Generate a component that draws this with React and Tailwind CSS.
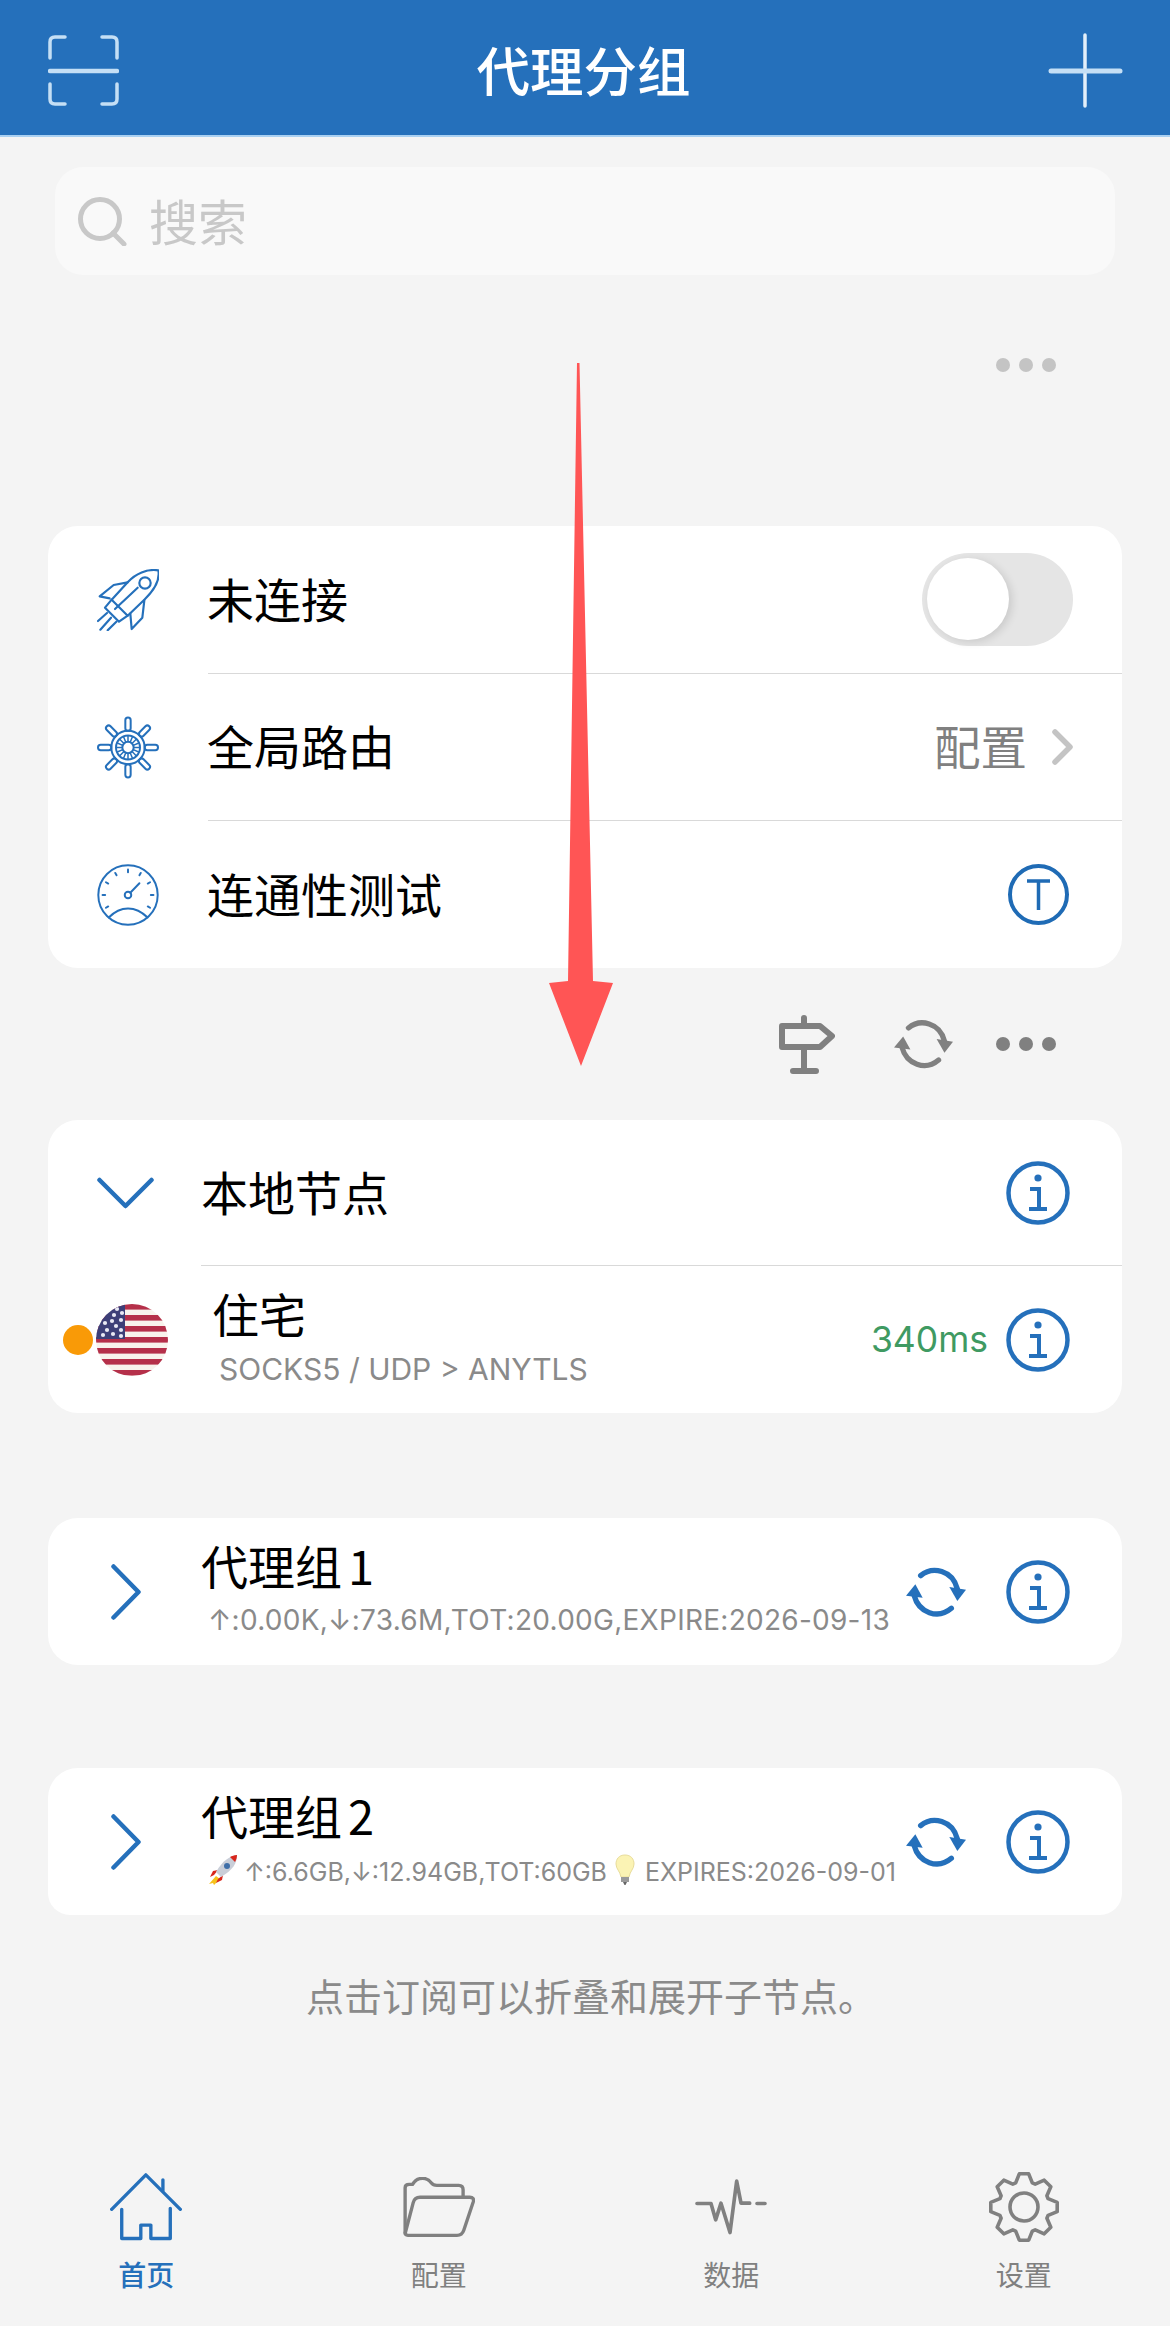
const BLUE = "#2570bb";
const GREY = "#808080";

function ScanIcon() {
  return (
    <svg width="71" height="71" viewBox="0 0 71 71" fill="none" stroke="#c5dff5" strokeLinecap="round">
      <path strokeWidth="3.5" d="M17 2H7Q2 2 2 7V23M54 2H64Q69 2 69 7V23M2 49V64Q2 69 7 69H17M69 49V64Q69 69 64 69H54" />
      <path strokeWidth="4.5" d="M2 36H69" />
    </svg>
  );
}

function PlusIcon() {
  return (
    <svg width="75" height="75" viewBox="0 0 75 75" fill="none" strokeLinecap="round">
      <path stroke="#e3effa" strokeWidth="3.5" d="M37 2V73" />
      <path stroke="#c5dff5" strokeWidth="5" d="M3 38H72" />
    </svg>
  );
}

function SearchIcon() {
  return (
    <svg width="49" height="49" viewBox="0 0 49 49" fill="none" stroke="#c8c8c8" strokeWidth="5" strokeLinecap="round">
      <circle cx="22" cy="22" r="19.5" />
      <path d="M35 36L46 47" />
    </svg>
  );
}

function RocketIcon() {
  return (
    <svg width="62" height="62" viewBox="0 0 186 186" fill="none" stroke={BLUE} strokeWidth="6.5" strokeLinecap="round" strokeLinejoin="round">
      <path d="M184 4C150 -1 115 14 92 40L44 92L92 140L142 92C170 65 190 35 184 4Z" />
      <circle cx="144" cy="42" r="17" />
      <path d="M92 40L50 48L8 82L38 88" />
      <path d="M142 94L136 146L104 180L100 134" />
      <path d="M44 92L24 116L66 158L92 140" />
      <path d="M54 120L122 56" />
      <path d="M30 132L3 156M42 146L10 182M58 158L32 184" />
    </svg>
  );
}

function HelmIcon() {
  const handles = [0, 45, 90, 135, 180, 225, 270, 315];
  const spokes = [0, 22.5, 45, 67.5, 90, 112.5, 135, 157.5, 180, 202.5, 225, 247.5, 270, 292.5, 315, 337.5];
  return (
    <svg width="63" height="63" viewBox="0 0 186 186" fill="none" stroke={BLUE} strokeWidth="6">
      {handles.map((a) => (
        <rect key={a} x="85" y="3" width="16" height="40" rx="8" fill="#fff" transform={`rotate(${a} 93 93)`} />
      ))}
      {spokes.map((a) => (
        <path key={a} strokeWidth="4.5" d="M93 58V76" transform={`rotate(${a} 93 93)`} />
      ))}
      <circle cx="93" cy="93" r="50" />
      <circle cx="93" cy="93" r="36" />
      <circle cx="93" cy="93" r="17" />
    </svg>
  );
}

function GaugeIcon() {
  const angles = [-120, -90, -60, -30, 0, 30, 60, 90, 120];
  return (
    <svg width="63" height="64" viewBox="0 0 190 192" fill="none" stroke={BLUE} strokeWidth="6" strokeLinecap="round">
      <circle cx="95" cy="96" r="91" />
      {angles.map((a) => (
        <path key={a} d="M95 18V26" transform={`rotate(${a} 95 96)`} />
      ))}
      <circle cx="95" cy="96" r="10" />
      <path d="M102 89L130 60" />
      <path d="M36 165C72 128 118 128 155 165" />
    </svg>
  );
}

function RefreshIcon({ color, width = 60, height = 50 }) {
  return (
    <svg width={width} height={height} viewBox="0 0 180 150" fill="none">
      <path d="M44 26C80 -4 140 10 154 66" stroke={color} strokeWidth="16" strokeLinecap="round" />
      <path d="M130 60L180 68L154 102Z" fill={color} />
      <path d="M136 124C96 158 38 138 24 84" stroke={color} strokeWidth="16" strokeLinecap="round" />
      <path d="M0 86L28 52L50 92Z" fill={color} />
    </svg>
  );
}

function InfoIcon() {
  return (
    <svg width="64" height="64" viewBox="0 0 64 64" fill="none" stroke={BLUE} strokeWidth="4.5">
      <circle cx="32" cy="32" r="29.5" />
      <circle cx="32" cy="17" r="3.6" fill={BLUE} stroke="none" />
      <path strokeWidth="4" d="M24 28H33V47M23 48H41" />
    </svg>
  );
}

function TestIcon() {
  return (
    <svg width="61" height="61" viewBox="0 0 61 61" fill="none" stroke="#1f6bb5" strokeWidth="4">
      <circle cx="30.5" cy="30.5" r="28.5" />
      <path strokeWidth="3.5" d="M19 17H42M30.5 17V46" />
    </svg>
  );
}

function SignIcon() {
  return (
    <svg width="56" height="59" viewBox="0 0 56 59" fill="none" stroke={GREY} strokeWidth="6" strokeLinecap="round" strokeLinejoin="round">
      <path d="M3 11H41L53 21L41 32H3Z" />
      <path d="M25 3V10M25 33V55M14 56H37" />
    </svg>
  );
}

function UsFlag() {
  const stripes = [0, 1, 2, 3, 4, 5, 6];
  const stars = [
    [21, 5], [26, 9], [18, 11], [25, 16], [16, 17], [9, 19],
    [20, 22], [11, 26], [25, 26], [17, 30], [7, 31], [25, 32],
  ];
  return (
    <svg width="72" height="72" viewBox="0 0 72 72" className="shrink-0">
      <defs>
        <clipPath id="flagClip">
          <circle cx="36" cy="36" r="36" />
        </clipPath>
      </defs>
      <g clipPath="url(#flagClip)">
        <rect width="72" height="72" fill="#f8f3ec" />
        {stripes.map((i) => (
          <rect key={i} y={i * 11} width="72" height="5.6" fill="#b5304a" />
        ))}
        <rect width="29" height="35" fill="#3d3f78" />
        {stars.map(([x, y]) => (
          <circle key={`${x}-${y}`} cx={x} cy={y} r="2.1" fill="#e9e9f4" />
        ))}
      </g>
    </svg>
  );
}

function ChevronDown() {
  return (
    <svg width="57" height="32" viewBox="0 0 57 32" fill="none" stroke={BLUE} strokeWidth="4.5" strokeLinecap="round" strokeLinejoin="round">
      <path d="M2.5 3L28.5 29L54.5 3" />
    </svg>
  );
}

function ChevronRight() {
  return (
    <svg width="30" height="56" viewBox="0 0 30 56" fill="none" stroke={BLUE} strokeWidth="4.5" strokeLinecap="round" strokeLinejoin="round">
      <path d="M2.5 2.5L27.5 28L2.5 53.5" />
    </svg>
  );
}

function RocketEmoji() {
  return (
    <svg width="30" height="30" viewBox="0 0 30 30" className="shrink-0">
      <path d="M8 21L1 29L5 28L6 30L12 24Z" fill="#f6c21c" />
      <path d="M6 20L2 22L5 16L10 15Z" fill="#d8261c" />
      <path d="M10 24L8 28L14 25L15 20Z" fill="#d8261c" />
      <path d="M29 0C22 1 15 5 8 17L13 22C25 15 29 8 29 0Z" fill="#c9ced8" />
      <path d="M29 0C26 0 24 1 22 2L27 7C28 5 29 3 29 0Z" fill="#d8261c" />
      <circle cx="19" cy="11" r="3" fill="#3f6fa8" />
    </svg>
  );
}

function BulbEmoji() {
  return (
    <svg width="20" height="32" viewBox="0 0 20 32" className="shrink-0">
      <path d="M10 1C4 1 1 5 1 10C1 15 5 17 6 23H14C15 17 19 15 19 10C19 5 16 1 10 1Z" fill="#fbf3b4" stroke="#e8dc9a" />
      <rect x="6" y="23" width="8" height="5" fill="#9a9a9a" />
      <path d="M8 28H12L10.5 31H9.5Z" fill="#666" />
    </svg>
  );
}

function HomeIcon() {
  return (
    <svg width="72" height="68" viewBox="0 0 215 202" fill="none" stroke={BLUE} strokeWidth="10" strokeLinecap="round" strokeLinejoin="round">
      <path d="M5 108L107 5L210 108" />
      <path d="M158 52V20" />
      <path d="M35 108V195H92V155H122V195H180V105" />
    </svg>
  );
}

function FolderIcon() {
  return (
    <svg width="72" height="60" viewBox="0 0 213 178" fill="none" stroke={GREY} strokeWidth="10" strokeLinecap="round" strokeLinejoin="round">
      <path d="M6 165V32Q6 22 18 22H28Q38 4 58 4Q74 4 84 18Q89 25 100 25H165Q178 25 178 38V58" />
      <path d="M6 168L30 76Q34 60 50 60H198Q212 60 208 74L180 158Q175 173 160 173H14Q6 173 6 165" />
    </svg>
  );
}

function PulseIcon() {
  return (
    <svg width="72" height="56" viewBox="0 0 216 167" fill="none" stroke={GREY} strokeWidth="11" strokeLinecap="round" strokeLinejoin="round">
      <path d="M6 73H48L62 122L78 72L105 160L125 6L138 72H164M186 73H210" />
    </svg>
  );
}

// eight toothed gear, worked out from the angles
function gearPath() {
  const pts = [];
  for (let i = 0; i < 8; i++) {
    const a = (i * Math.PI) / 4 - Math.PI / 2;
    const add = (r, d) => pts.push([36 + r * Math.cos(a + d), 36 + r * Math.sin(a + d)]);
    add(25.5, -0.33);
    add(33.5, -0.14);
    add(33.5, 0.14);
    add(25.5, 0.33);
  }
  return "M" + pts.map(([x, y]) => `${x.toFixed(1)} ${y.toFixed(1)}`).join("L") + "Z";
}

function GearIcon() {
  return (
    <svg width="72" height="72" viewBox="0 0 72 72" fill="none" stroke={GREY} strokeWidth="3.6" strokeLinejoin="round">
      <path d={gearPath()} />
      <circle cx="36" cy="36" r="14" />
    </svg>
  );
}

function Dots({ color }) {
  return (
    <div className="flex gap-[9px]">
      <span className={`w-[14px] h-[14px] rounded-full ${color}`} />
      <span className={`w-[14px] h-[14px] rounded-full ${color}`} />
      <span className={`w-[14px] h-[14px] rounded-full ${color}`} />
    </div>
  );
}

function SettingRow({ icon, label, height = "h-[147px]", children }) {
  return (
    <div className={`flex items-center ${height} pl-[49px] pr-[49px]`}>
      <div className="w-[62px] flex justify-center">{icon}</div>
      <div className="ml-[48px] pb-[5px] text-[47px] leading-none text-black">{label}</div>
      <div className="ml-auto flex items-center">{children}</div>
    </div>
  );
}

function ProxyCard({ title, subtitle, className }) {
  return (
    <div className={`mx-[48px] h-[147px] bg-white flex items-center ${className}`}>
      <div className="w-[153px] pl-[63px] flex items-center">
        <ChevronRight />
      </div>
      <div className="w-[705px] pb-[6px]">
        <div className="text-[47px] leading-[48px] text-black flex gap-[6px]">{title}</div>
        <div className="mt-[15px] pl-[7px] h-[32px] flex items-center whitespace-nowrap text-[#8a8a8a] font-['Inter','Noto_Sans_CJK_SC',sans-serif]">
          {subtitle}
        </div>
      </div>
      <RefreshIcon color={BLUE} />
      <div className="ml-[40px]">
        <InfoIcon />
      </div>
    </div>
  );
}

function Tab({ icon, label, active }) {
  return (
    <div className="flex flex-col items-center">
      <div className="h-[72px] flex items-center justify-center">{icon}</div>
      <div className={`mt-[15px] text-[28px] leading-[32px] ${active ? "text-[#2570bb] font-medium" : "text-[#808080]"}`}>{label}</div>
    </div>
  );
}

export default function App() {
  return (
    <div className="relative w-[1170px] h-[2326px] overflow-hidden bg-[#f4f4f4] font-['Noto_Sans_CJK_SC','Inter',sans-serif]">
      {/* Top bar */}
      <div className="h-[137px] pt-[6px] bg-[#2570bb] border-b-2 border-[#a9d0f2] flex items-center justify-between pl-[48px] pr-[47px]">
        <ScanIcon />
        <div className="pb-[3px] text-[53.5px] leading-none font-medium text-white">代理分组</div>
        <PlusIcon />
      </div>

      {/* Search */}
      <div className="mt-[30px] mx-[55px] h-[108px] rounded-[28px] bg-[#f9f9f9] flex items-center pl-[23px]">
        <SearchIcon />
        <div className="ml-[22px] pb-[4px] text-[49px] leading-none text-[#c8c8c8]">搜索</div>
      </div>

      <div className="mt-[83px] flex justify-end pr-[114px]">
        <Dots color="bg-[#c4c4c4]" />
      </div>

      {/* Connection card */}
      <div className="mt-[154px] mx-[48px] rounded-[30px] bg-white">
        <SettingRow icon={<RocketIcon />} label="未连接">
          <div className="relative w-[151px] h-[93px] rounded-full bg-[#e5e5e5]">
            <div className="absolute left-[5px] top-[5px] w-[82px] h-[82px] rounded-full bg-white shadow-[3px_2px_8px_rgba(0,0,0,0.12)]" />
          </div>
        </SettingRow>
        <div className="ml-[160px] h-px bg-[#d9d9d9]" />
        <SettingRow icon={<HelmIcon />} label="全局路由" height="h-[146px]">
          <span className="pb-[4px] text-[46.5px] leading-none text-[#808080]">配置</span>
          <svg className="ml-[25px]" width="21" height="36" viewBox="0 0 21 36" fill="none" stroke="#c4c4c4" strokeWidth="5.5" strokeLinecap="round" strokeLinejoin="round">
            <path d="M3 3L18 18L3 33" />
          </svg>
        </SettingRow>
        <div className="ml-[160px] h-px bg-[#d9d9d9]" />
        <SettingRow icon={<GaugeIcon />} label="连通性测试">
          <div className="mr-[4px]">
            <TestIcon />
          </div>
        </SettingRow>
      </div>

      {/* Toolbar */}
      <div className="mt-[46px] h-[60px] flex items-center justify-end pr-[114px]">
        <SignIcon />
        <div className="ml-[59px]">
          <RefreshIcon color={GREY} width={59} height={50} />
        </div>
        <div className="ml-[43px]">
          <Dots color="bg-[#808080]" />
        </div>
      </div>

      {/* Local nodes */}
      <div className="mt-[46px] mx-[48px] rounded-[30px] bg-white">
        <div className="h-[145px] flex items-center pl-[49px] pr-[52px]">
          <ChevronDown />
          <div className="ml-[47px] pb-[5px] text-[47px] leading-none text-black">本地节点</div>
          <div className="ml-auto">
            <InfoIcon />
          </div>
        </div>
        <div className="ml-[153px] h-px bg-[#d9d9d9]" />
        <div className="h-[147px] flex items-center pl-[15px] pr-[52px]">
          <span className="w-[30px] h-[30px] rounded-full bg-[#f99a07] mr-[3px]" />
          <UsFlag />
          <div className="ml-[44px] pb-[5px]">
            <div className="text-[47px] leading-[48px] text-black">住宅</div>
            <div className="mt-[15px] pl-[7px] text-[30px] leading-[34px] text-[#8a8a8a] font-['Inter',sans-serif]">SOCKS5 / UDP &gt; ANYTLS</div>
          </div>
          <div className="ml-auto text-[35.5px] leading-none text-[#3f9a62] font-['Inter',sans-serif]">340ms</div>
          <div className="ml-[18px]">
            <InfoIcon />
          </div>
        </div>
      </div>

      {/* Proxy groups */}
      <div className="mt-[105px]">
        <ProxyCard
          className="rounded-[30px]"
          title={<><span>代理组</span><span>1</span></>}
          subtitle={<span className="text-[28px] tracking-[0.27px]">↑:0.00K,↓:73.6M,TOT:20.00G,EXPIRE:2026-09-13</span>}
        />
      </div>
      <div className="mt-[103px]">
        <ProxyCard
          className="rounded-t-[30px] rounded-b-[22px]"
          title={<><span>代理组</span><span>2</span></>}
          subtitle={
            <>
              <RocketEmoji />
              <span className="ml-[6px] pt-[5px] text-[25px]">↑:6.6GB,↓:12.94GB,TOT:60GB</span>
              <span className="ml-[8px]"><BulbEmoji /></span>
              <span className="ml-[10px] pt-[5px] text-[25px]">EXPIRES:2026-09-01</span>
            </>
          }
        />
      </div>

      <div className="mt-[58px] pl-[12px] h-[44px] text-center text-[38px] leading-[44px] text-[#8a8a8a]">点击订阅可以折叠和展开子节点。</div>

      {/* Tab bar */}
      <div className="mt-[154px] grid grid-cols-4">
        <Tab active icon={<HomeIcon />} label="首页" />
        <Tab icon={<FolderIcon />} label="配置" />
        <Tab icon={<PulseIcon />} label="数据" />
        <Tab icon={<GearIcon />} label="设置" />
      </div>

      {/* Red annotation arrow laid over the page */}
      <svg className="absolute left-[540px] top-[355px]" width="80" height="720" viewBox="0 0 80 720">
        <path d="M37 8H39.5L53 626L73 628L41 711L9 628L28 626Z" fill="#ff5555" />
      </svg>
    </div>
  );
}
